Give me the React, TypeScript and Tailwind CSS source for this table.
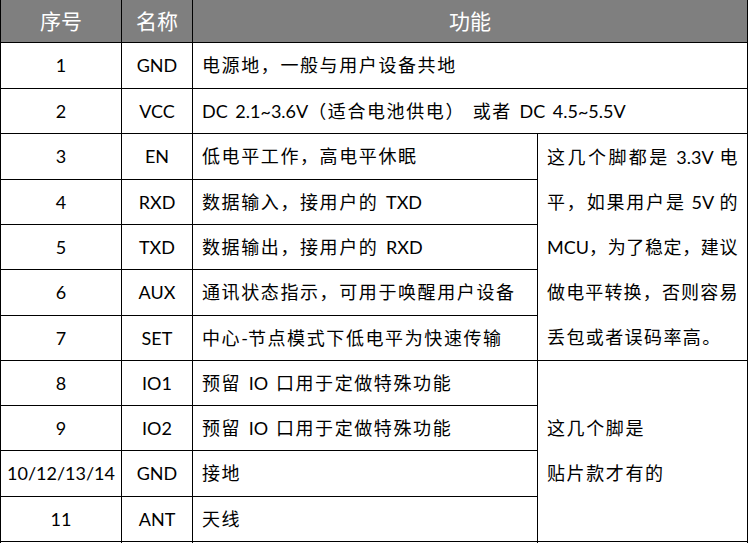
const CJK = /([\u3000-\u303f\u3400-\u9fff\uff00-\uffef]+)/;

function Txt({ s, tr = 'tracking-[1.6px]' }: { s: string; tr?: string }) {
  return (
    <span>
      {s
        .split(CJK)
        .filter(Boolean)
        .map((part, i) =>
          CJK.test(part) ? (
            <span key={i} className={tr}>
              {part}
            </span>
          ) : (
            <span key={i}>{part}</span>
          )
        )}
    </span>
  );
}

const cell = 'border-r border-b border-black flex items-center';
const head = 'border-r border-b border-black flex items-center justify-center bg-[#7f7f7f] text-white text-[21px] font-[\'Noto_Sans_CJK_SC\',sans-serif]';

const rows: [string, string, string][] = [
  ['1', 'GND', '电源地，一般与用户设备共地'],
  ['2', 'VCC', 'DC 2.1~3.6V（适合电池供电）\u00a0或者\u00a0DC 4.5~5.5V'],
  ['3', 'EN', '低电平工作，高电平休眠'],
  ['4', 'RXD', '数据输入，接用户的 TXD'],
  ['5', 'TXD', '数据输出，接用户的 RXD'],
  ['6', 'AUX', '通讯状态指示，可用于唤醒用户设备'],
  ['7', 'SET', '中心-节点模式下低电平为快速传输'],
  ['8', 'IO1', '预留 IO 口用于定做特殊功能'],
  ['9', 'IO2', '预留 IO 口用于定做特殊功能'],
  ['10/12/13/14', 'GND', '接地'],
  ['11', 'ANT', '天线'],
];

const levelNote = ['这几个脚都是 3.3V 电', '平，如果用户是 5V 的', 'MCU，为了稳定，建议', '做电平转换，否则容易'];

export default function App() {
  return (
    <div className="w-[749px] h-[543px] overflow-hidden bg-white text-black text-[18px] font-['Lato','Noto_Sans_CJK_SC',sans-serif] [word-spacing:3px]">
      <div className="grid w-[748px] grid-cols-[121px_71px_345px_210px] grid-rows-[43px_46px_45px_46px_45px_45px_46px_45px_45px_45px_46px_45px_45px] border-l border-black">
        {/* header */}
        <div className={head}>序号</div>
        <div className={head}>名称</div>
        <div className={`${head} col-span-2`}>功能</div>

        {rows.map(([no, name, desc], i) => (
          <div key={no} className="contents">
            <div className={`${cell} justify-center`}>{no}</div>
            <div className={`${cell} justify-center`}>{name}</div>
            <div className={`${cell} pl-[9px] whitespace-nowrap ${i < 2 ? 'col-span-2' : ''}`}>
              <Txt s={desc} />
            </div>
            {i === 2 && (
              <div className="row-span-5 border-r border-b border-black flex flex-col justify-center px-[9px] [word-spacing:0px]">
                {levelNote.map((line) => (
                  <div key={line} className="leading-[45px] whitespace-nowrap text-justify [text-align-last:justify]">
                    <Txt s={line} tr="tracking-[0.6px]" />
                  </div>
                ))}
                <div className="leading-[45px] whitespace-nowrap">
                  <Txt s="丢包或者误码率高。" tr="tracking-[1.4px]" />
                </div>
              </div>
            )}
            {i === 7 && (
              <div className="row-span-4 border-r border-b border-black flex flex-col justify-center px-[9px]">
                <div className="leading-[45px]">
                  <Txt s="这几个脚是" />
                </div>
                <div className="leading-[45px]">
                  <Txt s="贴片款才有的" />
                </div>
              </div>
            )}
          </div>
        ))}

        {/* next row, cut off by the page edge */}
        <div className={cell} />
        <div className={cell} />
        <div className={cell} />
        <div className={cell} />
      </div>
    </div>
  );
}
